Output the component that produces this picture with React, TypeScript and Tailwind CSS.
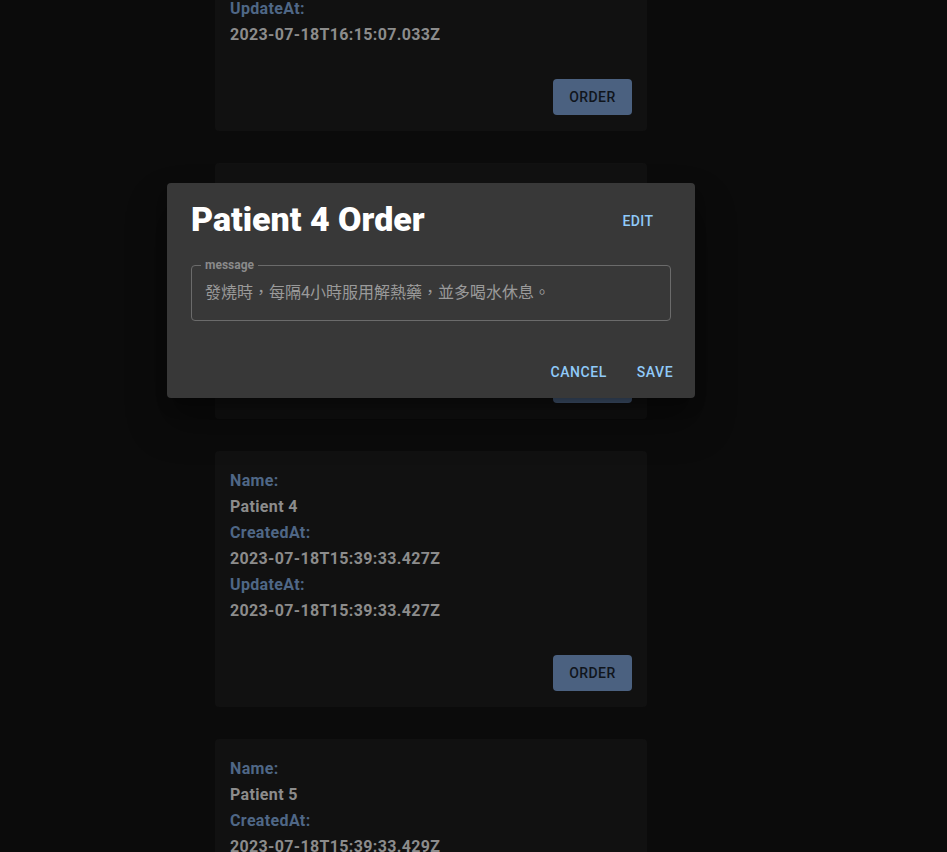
import React from 'react'

type Patient = { name: string; createdAt: string; updateAt: string }

const patients: Patient[] = [
  { name: 'Patient 2', createdAt: '2023-07-18T15:39:33.425Z', updateAt: '2023-07-18T16:15:07.033Z' },
  { name: 'Patient 3', createdAt: '2023-07-18T15:39:33.426Z', updateAt: '2023-07-18T15:39:33.426Z' },
  { name: 'Patient 4', createdAt: '2023-07-18T15:39:33.427Z', updateAt: '2023-07-18T15:39:33.427Z' },
  { name: 'Patient 5', createdAt: '2023-07-18T15:39:33.429Z', updateAt: '2023-07-18T15:39:33.429Z' },
]

function PatientCard({ p }: { p: Patient }) {
  return (
    <div className="w-[432px] h-[256px] bg-[#111111] rounded-[4px] px-[15px] pt-[17px] pb-[16px] flex flex-col">
      <div className="flex flex-col text-[16px] font-bold leading-[26px] tracking-[0.35px]">
        <span className="text-[#4f6786]">Name:</span>
        <span className="text-[#8c8c8c]">{p.name}</span>
        <span className="text-[#4f6786]">CreatedAt:</span>
        <span className="text-[#8c8c8c]">{p.createdAt}</span>
        <span className="text-[#4f6786]">UpdateAt:</span>
        <span className="text-[#8c8c8c]">{p.updateAt}</span>
      </div>
      <div className="mt-auto flex justify-end">
        <button className="w-[79px] h-[36px] bg-[#4b6180] rounded-[4px] text-[#10151c] text-[14px] font-medium tracking-[0.4px]">ORDER</button>
      </div>
    </div>
  )
}

export default function App() {
  return (
    <div className="relative h-[852px] overflow-hidden bg-[#0b0b0b]" style={{ fontFamily: 'Roboto, "Noto Sans CJK TC", sans-serif' }}>
      {/* card list */}
      <div className="flex flex-col items-start gap-[32px] pl-[215px] mt-[-125px]">
        {patients.map((p) => (
          <PatientCard key={p.name} p={p} />
        ))}
      </div>

      {/* dialog */}
      <div className="absolute left-[167px] top-[183px] w-[528px] h-[215px] bg-[#383838] rounded-[4px] shadow-[0_11px_15px_-7px_rgba(0,0,0,0.4),0_24px_38px_3px_rgba(0,0,0,0.3)] flex flex-col">
        <div className="flex items-center justify-between pl-[24px] pr-[25px] pt-[14px] h-[72px]">
          <h2 className="text-[34px] font-black text-white leading-[44px] mt-[-15px]">Patient 4 Order</h2>
          <button className="min-w-[64px] h-[36px] px-[8px] text-[14px] font-medium text-[#90caf9] tracking-[0.4px] mt-[-10px]">EDIT</button>
        </div>
        <div className="px-[24px] pt-[10px]">
          <div className="relative h-[56px] border border-[#6b6b6b] rounded-[4px] flex items-center px-[13px]">
            <span className="absolute left-[9px] top-[-8px] px-[4px] bg-[#383838] text-[12px] font-bold text-[#8a8a8a] leading-[14px]">message</span>
            <span className="text-[16px] text-[#9a9a9a]">發燒時，每隔4小時服用解熱藥，並多喝水休息。</span>
          </div>
        </div>
        <div className="mt-auto flex justify-end items-center gap-[8px] px-[8px] pb-[8px]">
          <button className="min-w-[64px] h-[36px] px-[8px] text-[14px] font-medium text-[#90caf9] tracking-[0.6px]">CANCEL</button>
          <button className="min-w-[64px] h-[36px] px-[8px] text-[14px] font-medium text-[#90caf9] tracking-[0.6px]">SAVE</button>
        </div>
      </div>
    </div>
  )
}
